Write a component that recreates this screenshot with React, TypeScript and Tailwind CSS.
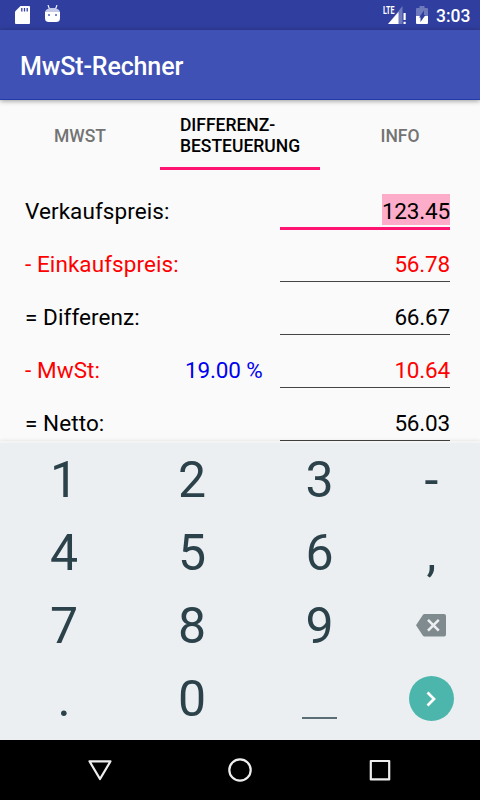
import React from 'react';

interface PriceRow {
  label: string;
  value: string;
  color: string;
  rate?: string;
  focused?: boolean;
}

const tabs = [
  { label: 'MWST', active: false },
  { label: 'DIFFERENZ-BESTEUERUNG', active: true },
  { label: 'INFO', active: false },
];

const rows: PriceRow[] = [
  { label: 'Verkaufspreis:', value: '123.45', color: 'text-black', focused: true },
  { label: '- Einkaufspreis:', value: '56.78', color: 'text-[#ff0000]' },
  { label: '= Differenz:', value: '66.67', color: 'text-black' },
  { label: '- MwSt:', value: '10.64', color: 'text-[#ff0000]', rate: '19.00 %' },
  { label: '= Netto:', value: '56.03', color: 'text-black' },
];

const keys = ['1', '2', '3', '-', '4', '5', '6', ',', '7', '8', '9', 'del', '.', '0', 'space', 'next'];

function StatusBar() {
  return (
    <div className="flex h-[30px] shrink-0 items-center bg-[#303f9f] text-white">
      <svg className="ml-[15px]" width="15" height="20" viewBox="0 0 15 20">
        <path d="M5.5 1H14a1 1 0 0 1 1 1v16a1 1 0 0 1-1 1H1a1 1 0 0 1-1-1V6.5z" fill="#fff" />
        <path d="M6.8 3v3.5M9.5 3v3.5M12.2 3v3.5" stroke="#303f9f" strokeWidth="1.3" />
      </svg>
      <svg className="ml-[15px]" width="15" height="20" viewBox="0 0 15 20">
        <path d="M3 0 4.5 4M12 0 10.5 4" stroke="#fff" strokeWidth="1.1" />
        <path d="M0 7.500C.3 4.500 3 3 7.500 3S14.700 4.500 15 7.500z" fill="#c5cae9" />
        <path d="M0 7h15v6c0 3-1.500 4-4 4H4C1.500 17 0 16 0 13z" fill="#fff" />
        <path d="M3 9h2v2H3zM10 9h2v2h-2z" fill="#7986cb" />
      </svg>
      <div className="grow" />
      <svg width="24" height="20" viewBox="0 0 24 20">
        <path d="M19.500 1v18H5z" fill="#6f7abc" />
        <path d="M15.500 7v12H5z" fill="#fff" />
        <path d="M20.500 8h2.200v7h-2.200zM20.500 16.800h2.200V19h-2.200z" fill="#fff" />
        <text x="0" y="9" fontSize="10.500" fontWeight="700" textLength="11.500" lengthAdjust="spacingAndGlyphs" fill="#fff">
          LTE
        </text>
      </svg>
      <svg className="ml-[9px]" width="12" height="20" viewBox="0 0 12 20">
        <path d="M3.5 1h5v2H11a1 1 0 0 1 1 1v7H0V4a1 1 0 0 1 1-1h2.500z" fill="#6f7abc" />
        <path d="M0 11h12v7a1 1 0 0 1-1 1H1a1 1 0 0 1-1-1z" fill="#fff" />
        <path d="M8 5.500v4.500h1.500L4.500 17v-4.500H3z" fill="#303f9f" />
      </svg>
      <span className="mr-[10px] ml-[8px] w-[34px] pt-px text-[17.500px] leading-[30px] font-medium whitespace-nowrap">3:03</span>
    </div>
  );
}

function TabBar() {
  return (
    <div className="grid h-[70px] shrink-0 grid-cols-3 text-[17.500px] leading-[21px] font-medium">
      {tabs.map((tab) => (
        <div
          key={tab.label}
          className={
            tab.active
              ? 'flex items-center justify-center border-b-[3px] border-[#ff1472] px-[20px] pt-[4px] text-black'
              : 'flex items-center justify-center px-[15px] pt-[2px] text-[#737373]'
          }
        >
          {tab.label}
        </div>
      ))}
    </div>
  );
}

function Row({ row }: { row: PriceRow }) {
  return (
    <div className={`flex h-[53px] shrink-0 pr-[30px] pl-[25px] text-[22.500px] leading-[30px] ${row.color}`}>
      <span className="w-[160px] pt-[7px] tracking-[0.08px] whitespace-nowrap">{row.label}</span>
      <span className="w-[95px] pt-[7px] tracking-[-0.15px] text-[#0000f0]">{row.rate}</span>
      <div
        className={
          row.focused
            ? 'h-[41px] w-[170px] border-b-[3px] border-[#ff1472] pt-[5px] text-right leading-none tracking-[-0.18px]'
            : 'h-[40px] w-[170px] border-b border-[#444] pt-[7px] text-right tracking-[-0.18px]'
        }
      >
        <span className={row.focused ? 'inline-block h-[31px] bg-[#fdadc9] leading-[34px]' : ''}>{row.value}</span>
      </div>
    </div>
  );
}

function Key({ name }: { name: string }) {
  if (name === 'del') {
    return (
      <svg className="mr-[2px]" width="30" height="23" viewBox="0 0 30 23">
        <path d="M8.500 0H28a2 2 0 0 1 2 2v18.500a2 2 0 0 1-2 2H8.500Q7.500 22.500 6.800 21.500L0 11.300 6.800 1Q7.500 0 8.500 0z" fill="#808b8f" />
        <path d="M12 5.800l10.800 10.800M22.800 5.800L12 16.600" stroke="#eceff1" strokeWidth="2.600" />
      </svg>
    );
  }
  if (name === 'space') {
    return <span className="mt-[38px] mr-px h-[2px] w-[35px] bg-[#5b6e76]" />;
  }
  if (name === 'next') {
    return (
      <span className="mr-px flex h-[45px] w-[45px] items-center justify-center rounded-full bg-[#4db6ac]">
        <svg width="10" height="16" viewBox="0 0 10 16">
          <path d="M1.500 1.500L8 8l-6.500 6.500" fill="none" stroke="#fff" strokeWidth="2.700" />
        </svg>
      </span>
    );
  }
  return <span>{name}</span>;
}

function Keypad() {
  return (
    <div className="h-[299px] shrink-0 border-t-2 border-[#f3f4f4] bg-[#eceff1] shadow-[0_-1px_3px_rgba(0,0,0,0.08)]">
      <div className="grid auto-rows-[73px] grid-cols-[128px_128px_127px_97px] text-[50px] leading-none text-[#2c424b]">
        {keys.map((key) => (
          <div key={key} className="flex items-center justify-center">
            <Key name={key} />
          </div>
        ))}
      </div>
    </div>
  );
}

function NavBar() {
  return (
    <div className="flex h-[60px] shrink-0 items-center justify-between bg-black px-[85px]">
      <svg width="30" height="30" viewBox="0 0 30 30" fill="none" stroke="#eee" strokeWidth="2.200" strokeLinejoin="round">
        <path d="M4.500 6.300h21L15 24z" />
      </svg>
      <svg width="30" height="30" viewBox="0 0 30 30" fill="none" stroke="#eee" strokeWidth="2.200">
        <circle cx="15" cy="15" r="10.700" />
      </svg>
      <svg width="30" height="30" viewBox="0 0 30 30" fill="none" stroke="#eee" strokeWidth="2.200" strokeLinejoin="round">
        <path d="M5.800 6h18.400v18.400H5.800z" />
      </svg>
    </div>
  );
}

export default function App() {
  return (
    <div className="flex h-[800px] w-[480px] flex-col overflow-hidden bg-[#fafafa] font-['Roboto',sans-serif]">
      <StatusBar />
      <header className="flex h-[70px] shrink-0 items-center border-b border-[#213ca8] bg-[#3f51b5] px-[20px] pt-[5px] text-[25px] font-medium tracking-[-0.12px] text-white shadow-[0_1px_5px_rgba(0,0,0,0.4)]">
        MwSt-Rechner
      </header>
      <TabBar />
      <main className="h-[271px] shrink-0 overflow-hidden pt-[19px]">
        {rows.map((row) => (
          <Row key={row.label} row={row} />
        ))}
      </main>
      <Keypad />
      <NavBar />
    </div>
  );
}
